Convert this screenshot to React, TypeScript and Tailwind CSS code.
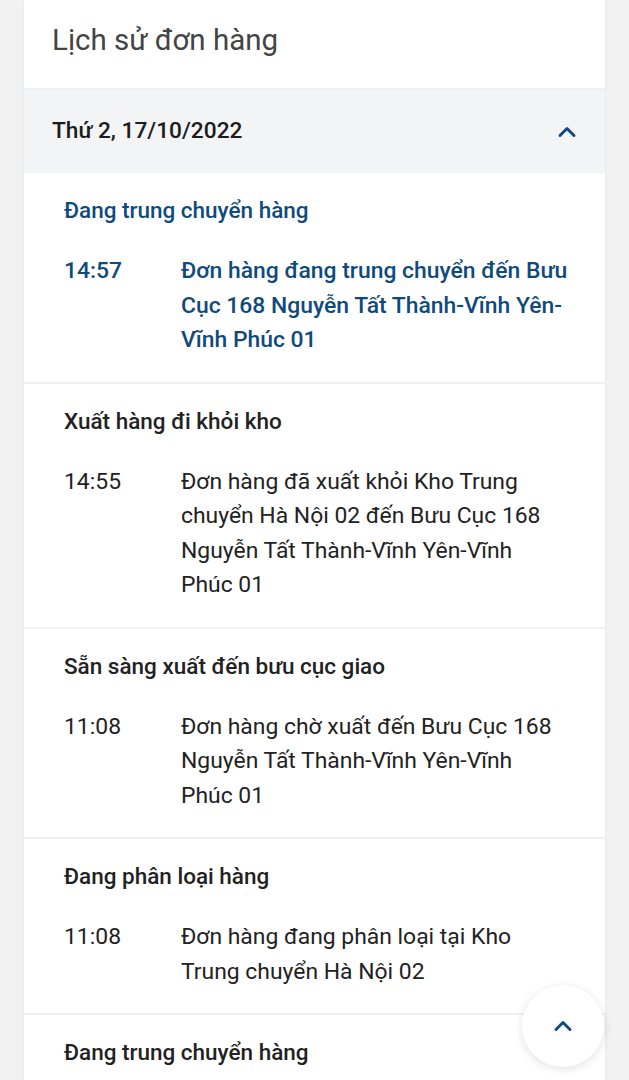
import { ChevronUp } from 'lucide-react';

type Entry = {
  title: string;
  time: string;
  text: string;
  active?: boolean;
};

const entries: Entry[] = [
  {
    title: 'Đang trung chuyển hàng',
    time: '14:57',
    text: 'Đơn hàng đang trung chuyển đến Bưu Cục 168 Nguyễn Tất Thành-Vĩnh Yên-Vĩnh Phúc 01',
    active: true,
  },
  {
    title: 'Xuất hàng đi khỏi kho',
    time: '14:55',
    text: 'Đơn hàng đã xuất khỏi Kho Trung chuyển Hà Nội 02 đến Bưu Cục 168 Nguyễn Tất Thành-Vĩnh Yên-Vĩnh Phúc 01',
  },
  {
    title: 'Sẵn sàng xuất đến bưu cục giao',
    time: '11:08',
    text: 'Đơn hàng chờ xuất đến Bưu Cục 168 Nguyễn Tất Thành-Vĩnh Yên-Vĩnh Phúc 01',
  },
  {
    title: 'Đang phân loại hàng',
    time: '11:08',
    text: 'Đơn hàng đang phân loại tại Kho Trung chuyển Hà Nội 02',
  },
  {
    title: 'Đang trung chuyển hàng',
    time: '10:12',
    text: 'Đơn hàng đang trung chuyển đến Kho Trung chuyển Hà Nội 02',
  },
];

function EntryRow({ entry }: { entry: Entry }) {
  const color = entry.active ? 'text-[#0f4a7c]' : 'text-[#222222]';
  return (
    <div className="border-t-2 border-[#eef1f4] pl-10 pr-[37px] pt-[22px] pb-[24px] first:border-t-0">
      <div className={`text-[22.5px] leading-[30px] font-medium ${color}`}>{entry.title}</div>
      <div className={`mt-[29px] flex text-[22.9px] leading-[34.5px] ${color} ${entry.active ? 'font-medium' : ''}`}>
        <div className="w-[117px] shrink-0">{entry.time}</div>
        <div className="flex-1">{entry.text}</div>
      </div>
    </div>
  );
}

export default function App() {
  return (
    <div className="relative h-[1080px] overflow-hidden bg-[#f2f2f2] font-['Roboto',sans-serif]">
      <div className="mx-6 bg-white shadow-[0_0_4px_rgba(0,0,0,0.06)]">
        <div className="flex h-[90px] items-center border-b-2 border-[#eef1f4] px-7 pb-2">
          <h1 className="text-[29.5px] text-[#444444]">Lịch sử đơn hàng</h1>
        </div>
        <div className="flex h-[83px] items-center justify-between bg-[#f3f4f5] pl-7 pr-6">
          <span className="text-[22.7px] font-medium text-[#1c1c1c]">Thứ 2, 17/10/2022</span>
          <ChevronUp className="h-7 w-7 text-[#0f4a7c]" strokeWidth={2.5} />
        </div>
        <div>
          {entries.map((e, i) => (
            <EntryRow key={i} entry={e} />
          ))}
        </div>
      </div>
      <button className="absolute left-[522px] top-[985px] flex h-[82px] w-[82px] items-center justify-center rounded-full bg-white shadow-[0_2px_10px_rgba(0,0,0,0.12)]">
        <ChevronUp className="h-7 w-7 text-[#0f4a7c]" strokeWidth={2.5} />
      </button>
    </div>
  );
}
